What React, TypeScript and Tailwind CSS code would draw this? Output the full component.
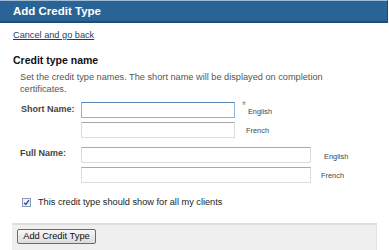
import React from "react";

function Input({ w, focused }: { w: string; focused?: boolean }) {
  return (
    <div
      className={
        focused
          ? `${w} h-[16px] bg-white border border-[#8fb3d4] border-t-[#5a86b3] rounded-[1px]`
          : `${w} h-[16px] bg-white border border-[#dcdcdc] border-t-[#a8a8a8] rounded-[1px]`
      }
    />
  );
}

export default function App() {
  return (
    <div className="w-[389px] h-[250px] bg-white overflow-hidden font-['Liberation_Sans',Arial,sans-serif] flex flex-col">
      <div className="w-[388px] h-[23px] shrink-0 bg-[#2a6496] border-t border-t-[#9fbbd6] border-b-2 border-b-[#1d4c78] border-r border-r-[#1d4c78] pl-[13px] flex items-center">
        <span className="text-white font-bold text-[11.5px] leading-[13px]">Add Credit Type</span>
      </div>

      <div className="mt-[7px] ml-[13px] text-[9.2px] leading-[11px] text-[#1d3d6b] underline">
        Cancel and go back
      </div>

      <div className="mt-[13px] ml-[13px] text-[10.5px] leading-[13px] font-bold text-[#111]">
        Credit type name
      </div>

      <div className="mt-[4px] ml-[20px] w-[330px] text-[9.2px] leading-[12px] text-[#555]">
        Set the credit type names. The short name will be displayed on completion certificates.
      </div>

      <div className="mt-[7px] pl-[21px] flex">
        <div className="w-[60px] h-[16px] flex items-center text-[9px] font-bold text-[#444]">Short Name:</div>
        <div className="flex flex-col gap-[4px]">
          <div className="flex items-center">
            <Input w="w-[154px]" focused />
            <span className="ml-[7px] self-start mt-[-1px] text-[10px] leading-[10px] text-[#888]">*</span>
            <span className="ml-[2px] mt-[3px] text-[7.4px] leading-[9px] text-[#444]">English</span>
          </div>
          <div className="flex items-center">
            <Input w="w-[154px]" />
            <span className="ml-[11px] mt-[1px] text-[7.4px] leading-[9px] text-[#444]">French</span>
          </div>
        </div>
      </div>

      <div className="mt-[9px] pl-[20px] flex">
        <div className="w-[61px] h-[13px] flex items-center text-[9px] font-bold text-[#444]">Full Name:</div>
        <div className="flex flex-col gap-[4px]">
          <div className="flex items-center">
            <Input w="w-[230px]" />
            <span className="ml-[13px] mt-[3px] text-[7.4px] leading-[9px] text-[#444]">English</span>
          </div>
          <div className="flex items-center">
            <Input w="w-[230px]" />
            <span className="ml-[10px] mt-[1px] text-[7.4px] leading-[9px] text-[#444]">French</span>
          </div>
        </div>
      </div>

      <div className="mt-[13px] pl-[22px] flex items-center h-[12px]">
        <div className="w-[9px] h-[9px] border border-[#8a9bb3] bg-[#eef2f7] flex items-center justify-center">
          <svg width="7" height="7" viewBox="0 0 7 7">
            <path d="M1 3.6 L2.8 5.4 L6 1.2" stroke="#2a4a8a" strokeWidth="1.3" fill="none" />
          </svg>
        </div>
        <span className="ml-[7px] text-[9.2px] leading-[11px] text-[#222]">
          This credit type should show for all my clients
        </span>
      </div>

      <div className="mt-[15px] mx-[12px] flex-1 bg-[#efefef] border-t-2 border-t-[#dedede] border-r border-r-[#e2e2e2] pt-[4px] pl-[5px]">
        <div className="w-[79px] h-[15px] border border-[#6a6a6a] rounded-[2px] bg-gradient-to-b from-[#f7f7f7] to-[#dcdcdc] flex items-center justify-center text-[9.3px] text-[#111] leading-[11px]">
          Add Credit Type
        </div>
      </div>
    </div>
  );
}
